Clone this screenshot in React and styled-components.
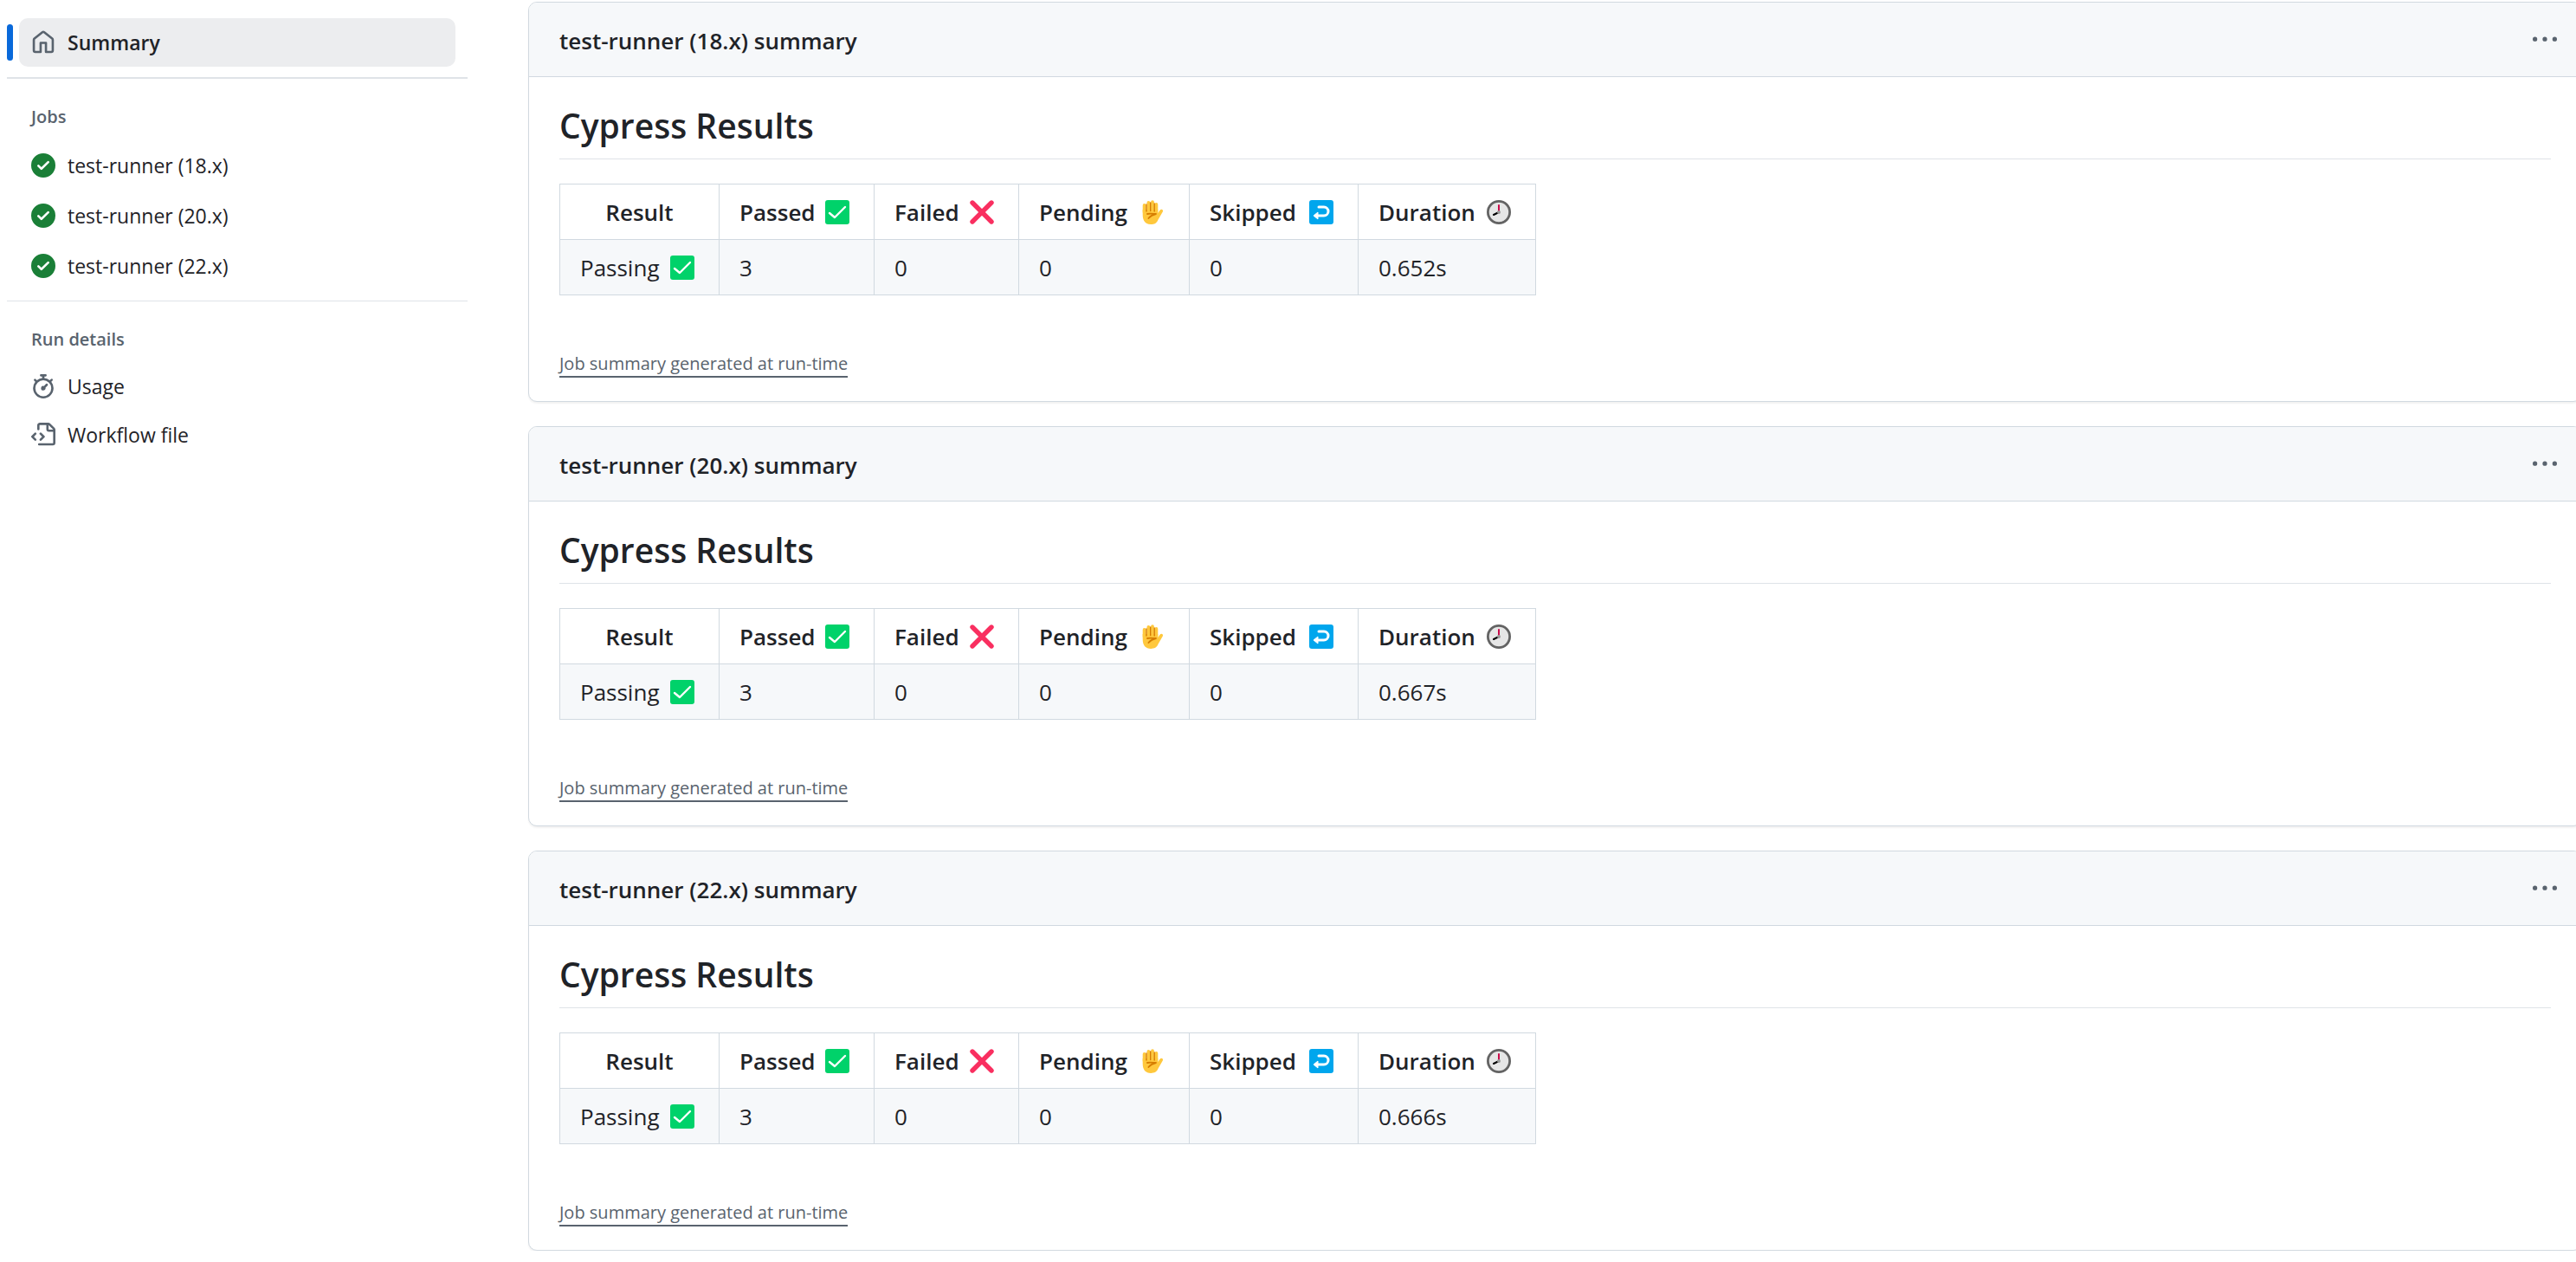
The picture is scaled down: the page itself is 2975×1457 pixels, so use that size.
import React from "react";
import styled, { createGlobalStyle } from "styled-components";

const GlobalStyle = createGlobalStyle`
  *, *::before, *::after { box-sizing: border-box; }
  body {
    margin: 0;
    background: #ffffff;
    color: #1f2328;
    font-family: "Segoe UI", "Open Sans", "Noto Sans", sans-serif;
    font-size: 23px;
    overflow-x: hidden;
  }
`;

const Page = styled.div`
  display: grid;
  grid-template-columns: 532px minmax(0, 1fr);
  column-gap: 70px;
  align-items: start;
  padding-left: 8px;
  margin-right: -7px;
`;

const Sidebar = styled.nav`
  display: flex;
  flex-direction: column;
  padding-top: 21px;
`;

const NavGroup = styled.section`
  display: flex;
  flex-direction: column;
  gap: ${({ $gap }) => $gap}px;
  padding-top: 30px;
`;

const NavTitle = styled.h2`
  margin: 0 0 0 28px;
  font-size: 20px;
  line-height: 28px;
  font-weight: 600;
  color: #59636e;
`;

const NavList = styled.ul`
  display: flex;
  flex-direction: column;
  gap: ${({ $gap }) => $gap}px;
  margin: 0;
  padding: 0;
  list-style: none;
`;

const NavItem = styled.li`
  display: flex;
  align-items: center;
  gap: 7px;
  padding-right: 14px;
`;

const Marker = styled.span`
  width: 7px;
  height: 42px;
  border-radius: 4px;
  background: ${({ $on }) => ($on ? "#0969da" : "transparent")};
`;

const NavLink = styled.a`
  flex: 1;
  display: flex;
  align-items: center;
  gap: 14px;
  height: 56px;
  padding: 0 14px;
  border-radius: 10px;
  background: ${({ $current }) => ($current ? "#ecedef" : "transparent")};
  color: #1f2328;
  font-size: 23px;
  line-height: 35px;
  font-weight: ${({ $current }) => ($current ? 600 : 400)};
  text-decoration: none;
`;

const Divider = styled.hr`
  width: 100%;
  height: ${({ $thick }) => $thick}px;
  margin: 12px 0 0;
  border: 0;
  background: #dfe3e8;
`;

const Main = styled.main`
  display: flex;
  flex-direction: column;
  gap: 28px;
  padding-top: 2px;
`;

const Card = styled.section`
  border: 1px solid #d1d9e0;
  border-radius: 10px;
  background: #ffffff;
  box-shadow: 0 2px 2px rgba(31, 35, 40, 0.06);
  overflow: hidden;
`;

const CardHeader = styled.header`
  display: flex;
  align-items: center;
  justify-content: space-between;
  height: 86px;
  padding: 0 28px 0 35px;
  border-bottom: 1px solid #d1d9e0;
  background: #f6f8fa;
`;

const CardTitle = styled.h3`
  margin: 0;
  padding-top: 2px;
  font-size: 26px;
  line-height: 42px;
  font-weight: 600;
`;

const MenuButton = styled.button`
  display: flex;
  padding: 0;
  border: 0;
  background: none;
  color: #59636e;
`;

const CardBody = styled.div`
  display: flex;
  flex-direction: column;
  align-items: flex-start;
  padding: 30px 35px 27px;
`;

const Heading = styled.h1`
  align-self: stretch;
  margin: 0 0 28px;
  padding-bottom: 12px;
  border-bottom: 1px solid #dfe3e8;
  font-size: 39px;
  line-height: 52px;
  font-weight: 600;
`;

const Table = styled.table`
  table-layout: fixed;
  width: 1127px;
  border-collapse: collapse;
  font-size: 26px;
  line-height: 42px;
`;

const HeadCell = styled.th`
  height: 64px;
  padding: 0 23px;
  border: 1px solid #d1d9e0;
  font-weight: 600;
`;

const Cell = styled.td`
  height: 64px;
  padding: 0 23px;
  border: 1px solid #d1d9e0;
  background: #f6f8fa;
`;

const Labelled = styled.span`
  display: flex;
  align-items: center;
  justify-content: space-between;
  padding-right: 5px;
`;

const RunNote = styled.a`
  margin-top: 65px;
  border-bottom: 2px solid #59636e;
  color: #59636e;
  font-size: 20px;
  line-height: 28px;
  text-decoration: none;
`;

const Glyph = styled.svg`
  flex: none;
  width: 28px;
  height: 28px;
  color: ${({ $color }) => $color || "#59636e"};
`;

const Octicon = ({ d, color }) => (
  <Glyph viewBox="0 0 16 16" fill="currentColor" $color={color} aria-hidden="true">
    <path d={d} />
  </Glyph>
);

const paths = {
  home: "M6.906.664a1.749 1.749 0 0 1 2.187 0l5.25 4.2c.415.332.657.835.657 1.367v7.019A1.75 1.75 0 0 1 13.25 15h-3.5a.75.75 0 0 1-.75-.75V9H7v5.25a.75.75 0 0 1-.75.75h-3.5A1.75 1.75 0 0 1 1 13.25V6.23c0-.531.242-1.034.657-1.366l5.25-4.2Zm1.25 1.171a.25.25 0 0 0-.312 0l-5.25 4.2a.25.25 0 0 0-.094.196v7.019c0 .138.112.25.25.25H5.5V8.25a.75.75 0 0 1 .75-.75h3.5a.75.75 0 0 1 .75.75v5.25h2.75a.25.25 0 0 0 .25-.25V6.23a.25.25 0 0 0-.094-.195Z",
  check: "M8 16A8 8 0 1 1 8 0a8 8 0 0 1 0 16Zm3.78-9.72a.751.751 0 0 0-.018-1.042.751.751 0 0 0-1.042-.018L6.75 9.19 5.28 7.72a.751.751 0 0 0-1.042.018.751.751 0 0 0-.018 1.042l2 2a.75.75 0 0 0 1.06 0Z",
  stopwatch: "M5.75.75A.75.75 0 0 1 6.5 0h3a.75.75 0 0 1 0 1.5h-.75v1l-.001.041a6.724 6.724 0 0 1 3.464 1.435l.007-.006.75-.75a.749.749 0 0 1 1.275.326.749.749 0 0 1-.215.734l-.75.75-.006.007a6.75 6.75 0 1 1-10.548 0L2.72 5.03l-.75-.75a.751.751 0 0 1 .018-1.042.751.751 0 0 1 1.042-.018l.75.75.007.006A6.72 6.72 0 0 1 7.25 2.541V1.5H6.5a.75.75 0 0 1-.75-.75ZM8 14.5a5.25 5.25 0 1 0-.001-10.501A5.25 5.25 0 0 0 8 14.5Zm.389-6.7 1.33-1.33a.75.75 0 1 1 1.061 1.06L9.45 8.861A1.503 1.503 0 0 1 8 10.75a1.499 1.499 0 1 1 .389-2.95Z",
  workflow: "M4 1.75C4 .784 4.784 0 5.75 0h5.586c.464 0 .909.184 1.237.513l2.914 2.914c.329.328.513.773.513 1.237v8.586A1.75 1.75 0 0 1 14.25 15h-9a.75.75 0 0 1 0-1.5h9a.25.25 0 0 0 .25-.25V6h-2.75A1.75 1.75 0 0 1 10 4.25V1.5H5.75a.25.25 0 0 0-.25.25v2.5a.75.75 0 0 1-1.5 0Zm1.72 4.97a.75.75 0 0 1 1.06 0l2 2a.75.75 0 0 1 0 1.06l-2 2a.749.749 0 0 1-1.275-.326.749.749 0 0 1 .215-.734l1.47-1.47-1.47-1.47a.75.75 0 0 1 0-1.06ZM3.28 7.78 1.81 9.25l1.47 1.47a.751.751 0 0 1-.018 1.042.751.751 0 0 1-1.042.018l-2-2a.75.75 0 0 1 0-1.06l2-2a.751.751 0 0 1 1.042.018.751.751 0 0 1 .018 1.042Zm8.22-6.218V4.25c0 .138.112.25.25.25h2.688l-.011-.013-2.914-2.914-.013-.011Z",
  kebab: "M8 9a1.5 1.5 0 1 0 0-3 1.5 1.5 0 0 0 0 3ZM1.5 9a1.5 1.5 0 1 0 0-3 1.5 1.5 0 0 0 0 3Zm13 0a1.5 1.5 0 1 0 0-3 1.5 1.5 0 0 0 0 3Z",
};

const CheckMark = () => (
  <Glyph viewBox="0 0 28 28" role="img" aria-label="passed">
    <rect width="28" height="28" rx="3" fill="#00d26a" />
    <path d="M5 15l6 5L23 8" fill="none" stroke="#fff" strokeWidth="2.4" strokeLinecap="round" strokeLinejoin="round" />
  </Glyph>
);

const CrossMark = () => (
  <Glyph viewBox="0 0 28 28" role="img" aria-label="failed">
    <path d="M3 3l22 22M25 3L3 25" fill="none" stroke="#f92f60" strokeWidth="5.4" strokeLinecap="round" />
  </Glyph>
);

const Hand = () => (
  <Glyph viewBox="0 0 28 28" role="img" aria-label="pending">
    <path d="M4.6 14V6M9.4 12V3M14 12V2.2M18.4 13V5" stroke="#ffc83d" strokeWidth="3.8" strokeLinecap="round" />
    <path d="M2.7 11h17.600v4l2.200-3.200c1.600-2 4.400-.6 3.300 1.800l-5.200 9c-1.600 4-4.400 5.400-8.400 5.400C6 28 2.700 24 2.700 17Z" fill="#ffc83d" />
    <path d="M7 5v8M11.700 3v9.500M16.200 4v9" fill="none" stroke="#d67d00" strokeWidth="1.400" strokeLinecap="round" />
    <path d="M8 16c3-.6 6-.2 10 0-3.400.8-6.400 2.400-8.600 5" fill="none" stroke="#d67d00" strokeWidth="1.8" strokeLinecap="round" strokeLinejoin="round" />
  </Glyph>
);

const ReturnArrow = () => (
  <Glyph viewBox="0 0 28 28" role="img" aria-label="skipped">
    <rect width="28" height="28" rx="3" fill="#00a6ed" />
    <path d="M11 8h6a5 5 0 0 1 0 10H9" fill="none" stroke="#fff" strokeWidth="3" strokeLinecap="round" />
    <path d="M10 14l-5 4 5 4Z" fill="#fff" stroke="#fff" strokeLinejoin="round" />
  </Glyph>
);

const Clock = () => (
  <Glyph viewBox="0 0 28 28" role="img" aria-label="clock">
    <circle cx="14" cy="14" r="12.6" fill="#e6e6e6" stroke="#636363" strokeWidth="2.8" />
    <path d="M14 14l-6 3" stroke="#000" strokeWidth="2" strokeLinecap="round" />
    <path d="M14 14V6" stroke="#ca0b4a" strokeWidth="2" strokeLinecap="round" />
    <circle cx="14" cy="14" r="2" fill="#9b9b9b" />
  </Glyph>
);

const columns = [
  { label: "Result", width: 184 },
  { label: "Passed", width: 179, Icon: CheckMark },
  { label: "Failed", width: 167, Icon: CrossMark },
  { label: "Pending", width: 197, Icon: Hand },
  { label: "Skipped", width: 195, Icon: ReturnArrow },
  { label: "Duration", width: 205, Icon: Clock },
];

const Col = styled.col`
  width: ${({ $width }) => $width}px;
`;

const runs = [
  { version: "18.x", values: ["3", "0", "0", "0", "0.652s"] },
  { version: "20.x", values: ["3", "0", "0", "0", "0.667s"] },
  { version: "22.x", values: ["3", "0", "0", "0", "0.666s"] },
];

const NavEntry = ({ icon, color, current, children }) => (
  <NavItem>
    <Marker $on={current} />
    <NavLink href="#" $current={current} aria-current={current ? "page" : undefined}>
      <Octicon d={icon} color={color} />
      <span>{children}</span>
    </NavLink>
  </NavItem>
);

const SummaryCard = ({ version, values }) => (
  <Card>
    <CardHeader>
      <CardTitle>test-runner ({version}) summary</CardTitle>
      <MenuButton type="button" aria-label="Summary options">
        <Octicon d={paths.kebab} />
      </MenuButton>
    </CardHeader>
    <CardBody>
      <Heading>Cypress Results</Heading>
      <Table>
        <colgroup>
          {columns.map((c) => (
            <Col key={c.label} $width={c.width} />
          ))}
        </colgroup>
        <thead>
          <tr>
            {columns.map(({ label, Icon }) => (
              <HeadCell key={label} scope="col">
                {Icon ? (
                  <Labelled>
                    {label}
                    <Icon />
                  </Labelled>
                ) : (
                  label
                )}
              </HeadCell>
            ))}
          </tr>
        </thead>
        <tbody>
          <tr>
            <Cell>
              <Labelled>
                Passing
                <CheckMark />
              </Labelled>
            </Cell>
            {values.map((v, i) => (
              <Cell key={i}>{v}</Cell>
            ))}
          </tr>
        </tbody>
      </Table>
      <RunNote href="#">Job summary generated at run-time</RunNote>
    </CardBody>
  </Card>
);

export default function App() {
  return (
    <>
      <GlobalStyle />
      <Page>
        <Sidebar aria-label="Workflow run">
          <NavList $gap={0}>
            <NavEntry icon={paths.home} current>
              Summary
            </NavEntry>
          </NavList>
          <Divider $thick={2} />
          <NavGroup $gap={14}>
            <NavTitle>Jobs</NavTitle>
            <NavList $gap={2}>
              {runs.map(({ version }) => (
                <NavEntry key={version} icon={paths.check} color="#1a7f37">
                  test-runner ({version})
                </NavEntry>
              ))}
            </NavList>
          </NavGroup>
          <Divider $thick={1} />
          <NavGroup $gap={12}>
            <NavTitle>Run details</NavTitle>
            <NavList $gap={0}>
              <NavEntry icon={paths.stopwatch}>Usage</NavEntry>
              <NavEntry icon={paths.workflow}>Workflow file</NavEntry>
            </NavList>
          </NavGroup>
        </Sidebar>
        <Main>
          {runs.map((run) => (
            <SummaryCard key={run.version} {...run} />
          ))}
        </Main>
      </Page>
    </>
  );
}
